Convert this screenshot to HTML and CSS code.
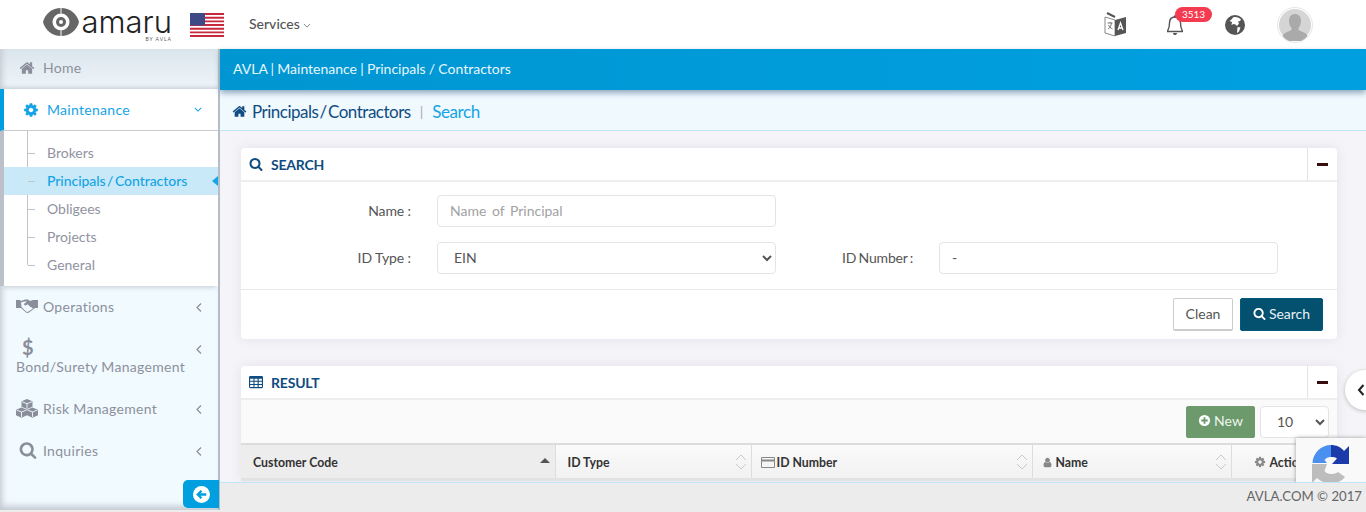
FILE: index.html
```html
<!DOCTYPE html>
<html lang="en">
<head>
  <meta charset="UTF-8" />
  <title>Principals / Contractors</title>
  <link rel="stylesheet" href="styles.css">
</head>
<body>
  <svg class="defs" width="0" height="0">
    <symbol id="i-home" viewBox="0 0 1792 1792"><path d="M1472 992v480q0 26-19 45t-45 19h-384v-384h-256v384h-384q-26 0-45-19t-19-45v-480q0-1 .5-3t.5-3l575-474 575 474q1 2 1 6zm223-69l-62 74q-8 9-21 11h-3q-13 0-21-7l-692-577-692 577q-12 8-24 7-13-2-21-11l-62-74q-8-10-7-23.500t11-21.500l719-599q32-26 76-26t76 26l244 204v-195q0-14 9-23t23-9h192q14 0 23 9t9 23v408l219 182q10 8 11 21.500t-7 23.500z"/></symbol>
    <symbol id="i-cog" viewBox="0 0 1792 1792"><path d="M1152 896q0-106-75-181t-181-75-181 75-75 181 75 181 181 75 181-75 75-181zm512-109v222q0 12-8 23t-20 13l-185 28q-19 54-39 91 35 50 107 138 10 12 10 25t-9 23q-27 37-99 108t-94 71q-12 0-26-9l-138-108q-44 23-91 38-16 136-29 186-7 28-36 28h-222q-14 0-24.500-8.500t-11.500-21.500l-28-184q-49-16-90-37l-141 107q-10 9-25 9-14 0-25-11-126-114-165-168-7-10-7-23 0-12 8-23 15-21 51-66.500t54-70.500q-27-50-41-99l-183-27q-13-2-21-12.500t-8-23.500v-222q0-12 8-23t19-13l186-28q14-46 39-92-40-57-107-138-10-12-10-24 0-10 9-23 26-36 98.500-107.500t94.500-71.500q13 0 26 10l138 107q44-23 91-38 16-136 29-186 7-28 36-28h222q14 0 24.500 8.500t11.500 21.500l28 184q49 16 90 37l142-107q9-9 24-9 13 0 25 10 129 119 165 170 7 8 7 22 0 12-8 23-15 21-51 66.500t-54 70.500q26 50 41 98l183 28q13 2 21 12.500t8 23.500z"/></symbol>
    <symbol id="i-search" viewBox="0 0 1792 1792"><path d="M1216 832q0-185-131.500-316.500t-316.500-131.500-316.500 131.500-131.500 316.500 131.500 316.500 316.500 131.500 316.500-131.500 131.500-316.500zm512 832q0 52-38 90t-90 38q-54 0-90-38l-343-342q-179 124-399 124-143 0-273.500-55.500t-225-150-150-225-55.500-273.500 55.500-273.500 150-225 225-150 273.500-55.500 273.500 55.500 225 150 150 225 55.500 273.500q0 220-124 399l343 343q37 37 37 90z"/></symbol>
    <symbol id="i-user" viewBox="0 0 1792 1792"><path d="M1536 1399q0 109-62.500 187t-150.500 78h-854q-88 0-150.500-78t-62.500-187q0-85 8.500-160.500t31.500-152 58.500-131 94-89 134.500-34.500q131 128 313 128t313-128q76 0 134.500 34.500t94 89 58.500 131 31.500 152 8.500 160.500zm-256-887q0 159-112.500 271.500t-271.500 112.500-271.500-112.500-112.500-271.500 112.500-271.500 271.500-112.500 271.500 112.500 112.500 271.500z"/></symbol>
    <symbol id="i-left" viewBox="0 0 10 16"><path d="M7.500 3 L2.500 8 L7.500 13" fill="none" stroke="currentColor" stroke-width="1.500"/></symbol>
    <symbol id="i-table" viewBox="0 0 16 14"><path fill-rule="evenodd" d="M1.500 0h13A1.500 1.500 0 0 1 16 1.500v11a1.500 1.500 0 0 1-1.500 1.500h-13A1.500 1.500 0 0 1 0 12.500v-11A1.500 1.500 0 0 1 1.500 0zM1.300 3.300v2.400h3.800V3.300zm5 0v2.400h3.500V3.300zm4.800 0v2.400h3.600V3.300zM1.300 6.800v2.400h3.800V6.800zm5 0v2.400h3.500V6.800zm4.800 0v2.400h3.600V6.800zM1.300 10.300v2.400h3.800v-2.400zm5 0v2.400h3.500v-2.400zm4.800 0v2.400h3.600v-2.400z"/></symbol>
    <symbol id="i-sort" viewBox="0 0 12 18"><path d="M1 7 L6 2 L11 7 M1 11 L6 16 L11 11" fill="none" stroke="#c9c9c9" stroke-width="1"/></symbol>
  </svg>

  <header class="topbar">
    <div class="logo">
      <svg class="logo-eye" viewBox="0 0 36 28">
        <path fill="#666" d="M0 14C2 6 9 0 18 0s16 6 18 14c-2 8-9 14-18 14S2 22 0 14z"/>
        <circle cx="18" cy="14" r="8.500" fill="#fff"/>
        <circle cx="18" cy="14" r="5" fill="#666"/>
        <circle cx="18" cy="14" r="2" fill="#fff"/>
        <path d="M18 0v5.500M18 22.500V28" stroke="#fff" stroke-width="1"/>
      </svg>
      <div class="logo-text">
        <span class="logo-name">amaru</span>
        <span class="logo-by">BY AVLA</span>
      </div>
    </div>
    <svg class="flag" viewBox="0 0 34 24">
      <rect width="34" height="24" fill="#fff"/>
      <path d="M0 1h34M0 4.700h34M0 8.400h34M0 12h34M0 15.700h34M0 19.400h34M0 23h34" stroke="#c8283c" stroke-width="1.900"/>
      <rect width="15" height="12.500" fill="#3e4a86"/>
    </svg>
    <div class="services">Services <svg class="chev-down" viewBox="0 0 10 6"><path d="M1 1l4 4 4-4" fill="none" stroke="#666" stroke-width="1"/></svg></div>
    <div class="top-icons">
      <svg class="ico-lang" viewBox="0 0 24 26">
        <path d="M1 5l10 3v16L1 21z" fill="#fff" stroke="#888"/>
        <path d="M11 8l11-3v16l-11 3z" fill="#555"/>
        <path d="M3 1l8 4" stroke="#555" stroke-width="2"/>
        <path d="M14 18l2.500-7 2.500 7M15 16h3" stroke="#fff" stroke-width="1.300" fill="none"/>
        <path d="M3.500 11h5M6 10v1M4 17c2-1 3-3 3.500-6M4.500 13c1 2 2 3 4 4" stroke="#666" fill="none" stroke-width=".9"/>
      </svg>
      <div class="bell">
        <svg viewBox="0 0 20 22"><path d="M3 16c1-2 1.500-4 1.500-7C4.500 5 7 3 10 3s5.500 2 5.500 6c0 3 .5 5 1.500 7 .5 1 .5 1.500 1 1.500H2c.5 0 .5-.5 1-1.500z" fill="none" stroke="#555" stroke-width="1.400"/><path d="M8 19c0 1.500 1 2 2 2s2-.5 2-2z" fill="#555"/><circle cx="10" cy="2.500" r="1.300" fill="#555"/></svg>
        <span class="badge">3513</span>
      </div>
      <svg class="ico-globe" viewBox="0 0 20 20">
        <circle cx="10" cy="10" r="10" fill="#555"/>
        <path fill="#fff" d="M8 2.500c3-1 6 0 8 2l-1 1.500-2 .5 1 2-2 2.500-1.500-1.500-2-.5-2 1 .5-3-2.500-1 2-1.500zM12.500 12l3 .5-1.500 4-2 1.500z"/>
      </svg>
      <div class="avatar">
        <svg viewBox="0 0 32 32"><circle cx="16" cy="16" r="16" fill="#d5d5d5"/><path fill="#aaa" d="M16 5c4 0 6 3 6 7 0 3-1 5-2.500 7v2l6.500 3c1.500 1 2 2 2.500 3a16 16 0 0 1-25 0c.5-1 1-2 2.500-3l6.500-3v-2C11 17 10 15 10 12c0-4 2-7 6-7z"/></svg>
      </div>
    </div>
  </header>

  <div class="layout">
    <nav class="sidebar">
      <a class="nav-item nav-home"><svg class="nav-ico"><use href="#i-home"/></svg>Home</a>
      <a class="nav-item nav-open"><svg class="nav-ico"><use href="#i-cog"/></svg>Maintenance<svg class="nav-chev" viewBox="0 0 10 6"><path d="M1 1l4 4 4-4" fill="none" stroke="currentColor" stroke-width="1.300"/></svg></a>
      <ul class="submenu">
        <li>Brokers</li>
        <li class="current">Principals / Contractors</li>
        <li>Obligees</li>
        <li>Projects</li>
        <li>General</li>
      </ul>
      <a class="nav-item">
        <svg class="nav-ico wide" viewBox="0 0 22 14"><path fill="#8a8d9a" d="M0 1h4l1 1 4-1.500h3L14 2l3-1h5v8h-3l-6 4.500c-1 .5-2 .5-3 0L5 9H0z"/><path d="M5 3.500l3-1h3l-3 2.500 1.500 1.500L12 5l5 4.500-4.500 3c-1 .5-1.500.5-2.500 0L5.500 8z" fill="#f0faff"/><path d="M11 3.500l2-1 3 1v4l-1 1-3.500-3.500-2.500 1.500L8 5z" fill="#8a8d9a"/></svg>Operations<svg class="nav-chev side"><use href="#i-left"/></svg>
      </a>
      <a class="nav-item nav-tall">
        <span class="dollar">$</span>
        <span>Bond/Surety Management</span>
        <svg class="nav-chev side"><use href="#i-left"/></svg>
      </a>
      <a class="nav-item">
        <svg class="nav-ico wide tall" viewBox="0 0 22 19"><path fill="#8a8d9a" d="M11 0l5.500 2.200v5.600L11 10 5.500 7.800V2.200zM5.500 8.500L11 10.700v5.600L5.500 18.800 0 16.300v-5.600zM16.500 8.500l5.500 2.200v5.600l-5.500 2.500-5.500-2.500v-5.600z"/><path d="M6 2.700l5 2 5-2M11 4.700V9.500M.5 11l5 2 5-2M5.500 13v5M11.500 11l5 2 5-2M16.500 13v5" fill="none" stroke="#f0faff" stroke-width=".9"/></svg>Risk Management<svg class="nav-chev side"><use href="#i-left"/></svg>
      </a>
      <a class="nav-item">
        <svg class="nav-ico search"><use href="#i-search"/></svg>Inquiries<svg class="nav-chev side"><use href="#i-left"/></svg>
      </a>
      <div class="collapse-row">
        <button class="collapse-btn"><svg viewBox="0 0 16 16"><circle cx="8" cy="8" r="8" fill="#fff"/><path d="M12.500 8H5M8 4.500L4.500 8 8 11.500" fill="none" stroke="#00a0e0" stroke-width="2.200"/></svg></button>
      </div>
    </nav>

    <main class="main">
      <div class="bluebar">AVLA | Maintenance | Principals / Contractors</div>
      <div class="pagehead">
        <svg class="pagehead-ico"><use href="#i-home"/></svg>
        <span class="pagehead-title">Principals / Contractors</span>
        <span class="pagehead-sep">|</span>
        <span class="pagehead-sub">Search</span>
      </div>

      <div class="content">
        <section class="card">
          <div class="card-head">
            <svg class="card-ico"><use href="#i-search"/></svg>
            <h3>SEARCH</h3>
            <span class="card-toggle"><i></i></span>
          </div>
          <div class="form">
            <div class="form-row">
              <label class="label-a">Name :</label>
              <input class="field" type="text" placeholder="Name  of  Principal">
            </div>
            <div class="form-row">
              <label class="label-a">ID Type :</label>
              <select class="field"><option>EIN</option></select>
              <label class="label-b">ID Number :</label>
              <input class="field field-b" type="text" value="-">
            </div>
          </div>
          <div class="card-foot">
            <button class="btn btn-clean">Clean</button>
            <button class="btn btn-search"><svg><use href="#i-search"/></svg>Search</button>
          </div>
        </section>

        <section class="card card-result">
          <div class="card-head">
            <svg class="card-ico"><use href="#i-table"/></svg>
            <h3>RESULT</h3>
            <span class="card-toggle"><i></i></span>
          </div>
          <div class="toolbar">
            <button class="btn btn-new"><svg viewBox="0 0 14 14"><circle cx="7" cy="7" r="6" fill="#fff"/><path d="M7 3.500v7M3.500 7h7" stroke="#6c9a6c" stroke-width="2"/></svg>New</button>
            <select class="page-size"><option>10</option></select>
          </div>
          <table class="grid">
            <thead>
              <tr>
                <th class="col-code sorted">Customer Code<i class="sort-up"></i></th>
                <th class="col-type">ID Type<svg class="sort"><use href="#i-sort"/></svg></th>
                <th class="col-num"><svg class="th-ico card-i" viewBox="0 0 14 11"><path fill="#888" fill-rule="evenodd" d="M1 0h12a1 1 0 0 1 1 1v9a1 1 0 0 1-1 1H1a1 1 0 0 1-1-1V1a1 1 0 0 1 1-1zm0 1v1.500h12V1zm0 3.500V10h12V4.500z"/></svg>ID Number<svg class="sort"><use href="#i-sort"/></svg></th>
                <th class="col-name"><svg class="th-ico user"><use href="#i-user"/></svg>Name<svg class="sort"><use href="#i-sort"/></svg></th>
                <th class="col-act"><svg class="th-ico cog"><use href="#i-cog"/></svg>Actions</th>
              </tr>
            </thead>
          </table>
        </section>

        <div class="recaptcha">
          <svg viewBox="0 0 38 38">
            <path fill="#4a90f0" d="M.5 18C1 8 9 0 19 0v12c-3 0-5 1-6.500 3L15 18z"/>
            <path fill="#1c3aa9" d="M19 0c5 0 10 2 13 6l5-5v18H20l5-5.500c-1.500-1.500-3.500-1.500-6-1.500z"/>
            <path fill="#bdbdbd" d="M0 19v19l5-5c4 4 9 5 14 5 6 0 11-2 14-6l-7-5c-2 1.500-4 2-7 2-3 0-5-1-6.500-3L15 19z"/>
          </svg>
        </div>
        <button class="side-tab"><svg viewBox="0 0 8 12"><path d="M6.500 1L2 6l4.500 5" fill="none" stroke="#222" stroke-width="2"/></svg></button>
      </div>

      <footer class="footer">AVLA.COM © 2017</footer>
    </main>
  </div>
</body>
</html>
```
FILE: styles.css
```css
* {
  box-sizing: border-box;
}

html, body {
  margin: 0;
  height: 100%;
  overflow: hidden;
}

body {
  font-family: "Lato", "Open Sans", sans-serif;
  font-size: 14px;
  color: #555;
  background: #ececec;
}

.defs {
  position: absolute;
}

/* top bar */
.topbar {
  height: 49px;
  background: #fff;
  display: flex;
  align-items: center;
  padding-left: 43px;
  padding-right: 53px;
}

.logo {
  display: flex;
  align-items: flex-start;
  width: 147px;
  padding-top: 2px;
}

.logo-eye {
  width: 36px;
  height: 28px;
  margin-right: 3px;
}

.logo-text {
  display: flex;
  flex-direction: column;
  align-items: flex-end;
  width: 90px;
}

.logo-name {
  font-family: "Inter", sans-serif;
  font-weight: 300;
  font-size: 31px;
  line-height: 27px;
  color: #222;
}

.logo-by {
  font-size: 5px;
  letter-spacing: 1px;
  line-height: 7px;
  margin-top: 1px;
  color: #555;
}

.flag {
  width: 34px;
  height: 24px;
  margin-right: 25px;
}

.services {
  font-size: 14px;
  color: #555;
  font-weight: 500;
  padding-bottom: 2px;
}

.chev-down {
  width: 8px;
  height: 5px;
  vertical-align: 1px;
}

.top-icons {
  margin-left: auto;
  display: flex;
  align-items: center;
}

.ico-lang {
  width: 24px;
  height: 26px;
  margin-right: 37px;
}

.bell {
  position: relative;
  width: 20px;
  height: 22px;
  margin-right: 40px;
}

.bell svg {
  width: 20px;
  height: 22px;
  display: block;
}

.badge {
  position: absolute;
  left: 10px;
  top: -7px;
  width: 37px;
  height: 15px;
  border-radius: 8px;
  background: #f53b50;
  color: #fff;
  font-size: 10px;
  line-height: 15px;
  text-align: center;
}

.ico-globe {
  width: 20px;
  height: 20px;
  margin-right: 32px;
}

.avatar {
  width: 36px;
  height: 36px;
  padding: 1px;
  border: 1px solid #e6e6e6;
  border-radius: 50%;
}

.avatar svg {
  display: block;
  width: 32px;
  height: 32px;
}

/* layout */
.layout {
  display: flex;
  height: 463px;
}

.sidebar {
  width: 220px;
  height: 461px;
  flex-shrink: 0;
  background: #f0faff;
  border-right: 2px solid #b4bcc6;
  box-shadow: inset 6px 0 6px -4px #c5c9d2, inset 0 -8px 6px -4px #c5c9d2;
  position: relative;
}

.nav-item {
  display: flex;
  align-items: center;
  height: 42px;
  padding-left: 16px;
  padding-bottom: 2px;
  color: #8d909c;
  font-size: 14px;
  letter-spacing: .3px;
  position: relative;
}

.nav-ico {
  width: 16px;
  height: 16px;
  fill: #8a8d9a;
  margin-left: 3px;
  margin-right: 8px;
  flex-shrink: 0;
}

.nav-ico.wide {
  width: 22px;
  height: 14px;
  margin-left: 0;
  margin-right: 5px;
}

.nav-ico.tall {
  height: 19px;
}

.nav-ico.search {
  width: 18px;
  height: 18px;
  margin-right: 6px;
}

.nav-home {
  height: 40px;
  padding-bottom: 3px;
  background: linear-gradient(#dbe5ec, #eef5fa);
  box-shadow: inset 0 -5px 5px -4px #c2c8d0, inset 6px 0 6px -4px #c5c9d2;
}

.nav-open {
  background: #fff;
  color: #14a4e6;
  border-left: 4px solid #00a0e0;
  padding-left: 20px;
  padding-bottom: 0;
  border-bottom: 1px solid #c9cbd0;
}

.nav-open .nav-ico {
  fill: #14a4e6;
  margin-left: -1px;
}

.nav-chev {
  position: absolute;
  right: 16px;
  width: 8px;
  height: 5px;
  color: #14a4e6;
}

.nav-chev.side {
  right: 15px;
  top: 15px;
  width: 8px;
  height: 13px;
  color: #8a8d9a;
}

.nav-tall {
  height: 60px;
  display: block;
  padding-top: 8px;
}

.dollar {
  display: block;
  font-size: 20px;
  font-weight: 700;
  line-height: 22px;
  margin-left: 6px;
  color: #8a8d9a;
}

.submenu {
  list-style: none;
  margin: 0;
  padding: 8px 0 7px;
  background: #fff;
  border-left: 4px solid #bcc0c8;
  box-shadow: 0 3px 5px -2px #c2c8d0;
  position: relative;
}

.submenu::before {
  content: "";
  position: absolute;
  left: 23px;
  top: 0;
  bottom: 21px;
  width: 1px;
  background: #c4c4c4;
}

.submenu li {
  height: 28px;
  line-height: 28px;
  padding-left: 43px;
  color: #90939f;
  position: relative;
}

.submenu li::before {
  content: "";
  position: absolute;
  left: 24px;
  top: 14px;
  width: 7px;
  height: 1px;
  background: #c4c4c4;
}

.submenu li.current {
  background: #c9e9f8;
  color: #14a4e6;
  font-weight: 500;
  word-spacing: -2px;
  letter-spacing: -.05px;
}

.submenu li.current::after {
  content: "";
  position: absolute;
  right: 0;
  top: 9px;
  border: 5px solid transparent;
  border-left: 0;
  border-right: 6px solid #14a4e6;
}

.collapse-row {
  display: flex;
  justify-content: flex-end;
  padding-top: 8px;
  margin-right: -1px;
}

.collapse-btn {
  width: 36px;
  height: 28px;
  border: none;
  padding: 0;
  background: #00a0e0;
  border-radius: 5px 0 0 5px;
  display: flex;
  align-items: center;
  justify-content: center;
}

.collapse-btn svg {
  width: 17px;
  height: 17px;
}

/* main */
.main {
  flex: 1;
  min-width: 0;
  display: flex;
  flex-direction: column;
  background: #f5f4f8;
}

.bluebar {
  height: 41px;
  background: linear-gradient(90deg, #0096d2, #00a0e0);
  color: #e8f6fd;
  line-height: 39px;
  padding-left: 13px;
  word-spacing: -.4px;
  box-shadow: 0 3px 6px #8fa6bd;
  position: relative;
}

.pagehead {
  height: 41px;
  background: #f0f9fe;
  border-bottom: 1px solid #bfe6f8;
  display: flex;
  align-items: center;
  padding-left: 12px;
  padding-top: 2px;
  font-size: 17px;
}

.pagehead-ico {
  width: 15px;
  height: 15px;
  fill: #0f4c81;
  margin-right: 5px;
}

.pagehead-title {
  color: #0f4c81;
  letter-spacing: -.5px;
  word-spacing: -2.600px;
}

.pagehead-sep {
  color: #aaa;
  font-size: 14px;
  margin: 0 9px;
}

.pagehead-sub {
  color: #14a4e6;
  letter-spacing: -.4px;
}

.content {
  flex: 1;
  min-height: 0;
  overflow: hidden;
  padding: 17px 29px 0 21px;
  position: relative;
}

.card {
  background: #fff;
  border-radius: 4px;
  box-shadow: 0 0 12px #e3e1e9;
}

.card-result {
  margin-top: 27px;
}

.card-head {
  height: 34px;
  border-bottom: 2px solid #eee;
  display: flex;
  align-items: center;
  padding-left: 8px;
}

.card-head h3 {
  margin: 0;
  font-size: 14px;
  font-weight: 700;
  color: #0f4c81;
  letter-spacing: -.2px;
}

.card-ico {
  width: 14px;
  height: 14px;
  fill: #0f4c81;
  margin-right: 8px;
}

.card-toggle {
  margin-left: auto;
  width: 30px;
  height: 33px;
  border-left: 1px solid #e4e4e4;
  display: flex;
  align-items: center;
  justify-content: center;
}

.card-toggle i {
  width: 11px;
  height: 3px;
  background: #3a0d0d;
}

.form {
  padding: 13px 0 15px;
}

.form-row {
  display: flex;
  align-items: center;
  height: 32px;
}

.form-row + .form-row {
  margin-top: 15px;
}

.form-row label {
  padding-bottom: 2px;
  letter-spacing: -.1px;
}

.label-a {
  width: 170px;
  text-align: right;
  margin-right: 26px;
  color: #555;
}

.label-b {
  width: 137px;
  text-align: right;
  margin-right: 26px;
  color: #555;
  word-spacing: -1px;
  letter-spacing: -.2px !important;
}

.field {
  width: 339px;
  height: 32px;
  border: 1px solid #e4e4e4;
  border-radius: 4px;
  background: #fff;
  padding: 0 12px 2px;
  font: inherit;
  color: #555;
  outline: none;
}

.field::placeholder {
  color: #a2a2a2;
  white-space: pre;
  word-spacing: -.8px;
}

.field-b {
  width: 339px;
}

.card-foot {
  border-top: 1px solid #e8e8e8;
  height: 50px;
  display: flex;
  justify-content: flex-end;
  align-items: center;
  gap: 7px;
  padding-right: 14px;
}

.btn {
  font: inherit;
  height: 33px;
  padding: 0 0 2px;
  border-radius: 2px;
  display: inline-flex;
  align-items: center;
  justify-content: center;
}

.btn svg {
  width: 13px;
  height: 13px;
  margin-right: 3px;
}

.btn-clean {
  width: 60px;
  background: #fff;
  border: 1px solid #ccc;
  border-bottom-width: 2px;
  color: #555;
}

.btn-search {
  width: 83px;
  background: #04506f;
  border: 1px solid #03587c;
  color: #e8f2f6;
}

.btn-search svg {
  fill: #fff;
}

.toolbar {
  height: 45px;
  background: #fafafa;
  border-bottom: 2px solid #dcdcdc;
  display: flex;
  align-items: center;
  justify-content: flex-end;
  padding-right: 8px;
}

.btn-new {
  width: 69px;
  height: 32px;
  background: #6c9a6c;
  border: 1px solid #6c9a6c;
  color: #eef5ee;
  margin-right: 5px;
}

.page-size {
  width: 69px;
  height: 32px;
  border: 1px solid #e4e4e4;
  border-radius: 4px;
  background: #fff;
  font: inherit;
  color: #555;
  padding-left: 12px;
}

.grid {
  width: 100%;
  table-layout: fixed;
  border-collapse: collapse;
}

.grid th {
  height: 34px;
  text-align: left;
  font-size: 12.300px;
  font-weight: 700;
  color: #333;
  border-right: 1px solid #ddd;
  border-bottom: 3px solid #e2e2e2;
  background: linear-gradient(#fafafa, #f1f1f1);
  padding: 2px 0 0 5px;
  position: relative;
}

.grid th.sorted {
  background: #ededed;
  padding-left: 12px;
}

.col-code { width: 314px; }
.col-type { width: 196px; }
.col-num { width: 281px; }
.col-name { width: 199px; }

.col-type {
  padding-left: 12px !important;
}

.col-num {
  padding-left: 9px !important;
}

.col-name {
  padding-left: 9px !important;
}

.col-act {
  padding-left: 22px !important;
  border-right: none !important;
}

.th-ico {
  width: 13px;
  height: 11px;
  margin-right: 3px;
  vertical-align: -1px;
}

.th-ico.card-i {
  width: 14px;
  margin-right: 2px;
}

.th-ico.user {
  width: 11px;
  fill: #888;
}

.th-ico.cog {
  width: 12px;
  height: 12px;
  fill: #888;
  margin-right: 4px;
}

.sort {
  position: absolute;
  right: 4px;
  top: 8px;
  width: 12px;
  height: 18px;
}

.sort-up {
  position: absolute;
  right: 5px;
  top: 13px;
  border: 5px solid transparent;
  border-top: 0;
  border-bottom: 5px solid #555;
}

/* overlays */
.recaptcha {
  position: absolute;
  right: 0;
  top: 307px;
  width: 70px;
  height: 60px;
  background: #f9f9f9;
  box-shadow: 0 0 4px #999;
  padding: 7px 0 0 16px;
}

.recaptcha svg {
  width: 38px;
  height: 38px;
  display: block;
}

.side-tab {
  position: absolute;
  right: -2px;
  top: 239px;
  width: 23px;
  height: 40px;
  border: none;
  background: #fff;
  border-radius: 20px 0 0 20px;
  box-shadow: 0 1px 4px #bbb;
  padding: 0 0 0 12px;
}

.side-tab svg {
  display: block;
  width: 8px;
  height: 12px;
}

.footer {
  height: 30px;
  flex-shrink: 0;
  background: #ececec;
  border-top: 1px solid #bfe6f8;
  text-align: right;
  font-size: 13.200px;
  line-height: 26px;
  padding-right: 4px;
  color: #666;
  position: relative;
}
```
